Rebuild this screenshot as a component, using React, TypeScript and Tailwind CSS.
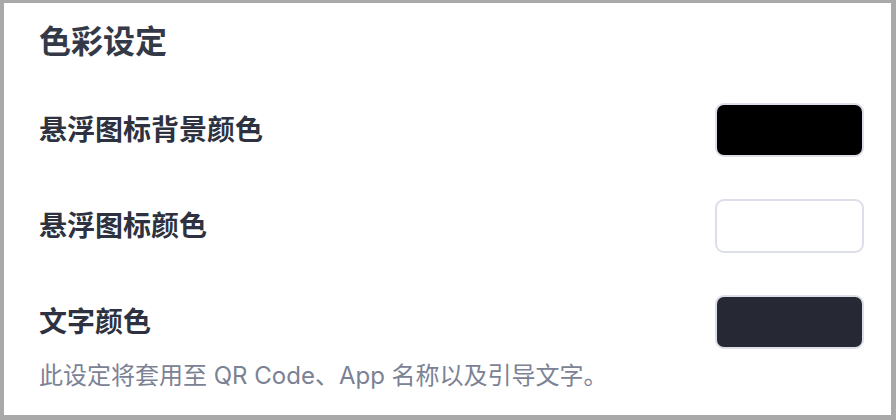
const rows = [
  { label: "悬浮图标背景颜色", color: "bg-[#000000]" },
  { label: "悬浮图标颜色", color: "bg-[#ffffff]" },
  { label: "文字颜色", color: "bg-[#262833]" },
];

function Swatch({ color }: { color: string }) {
  return (
    <div
      className={`h-[54px] w-[149px] shrink-0 rounded-[9px] border-2 border-[#dcdfe8] ${color}`}
    />
  );
}

export default function App() {
  return (
    <div
      className="h-[420px] w-[896px] bg-[#a9a9a9] pl-[4px] pt-[3px] pr-[5px] pb-[5px]"
      style={{ fontFamily: '"Inter", "Noto Sans CJK SC", sans-serif' }}
    >
      <div className="h-full w-full bg-white pl-[35px] pr-[27px] pt-[19px]">
        <h2 className="h-[40px] text-[32px] font-bold leading-[40px] text-[#343947]">
          色彩设定
        </h2>
        {rows.map((r, i) => (
          <div
            key={r.label}
            className={`flex h-[54px] items-center justify-between ${i === 0 ? "mt-[41px]" : "mt-[42px]"}`}
          >
            <span className="text-[28px] font-bold leading-[36px] text-[#2e3240]">
              {r.label}
            </span>
            <Swatch color={r.color} />
          </div>
        ))}
        <p className="mt-[12px] text-[24px] leading-[30px] text-[#7b8295]">
          此设定将套用至 QR Code、App 名称以及引导文字。
        </p>
      </div>
    </div>
  );
}
